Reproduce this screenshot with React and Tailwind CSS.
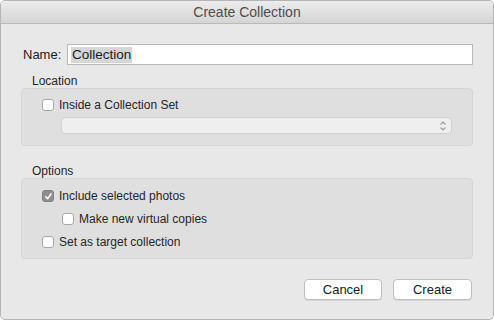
import React from 'react';

const Check = ({ checked }) => (
  <span
    className={`w-[12px] h-[12px] rounded-[3px] border flex items-center justify-center shrink-0 ${
      checked ? 'bg-[#8f8f8f] border-[#808080]' : 'bg-white border-[#a8a8a8]'
    }`}
  >
    {checked && (
      <svg width="9" height="9" viewBox="0 0 9 9">
        <path d="M1.8 4.8 L3.6 6.8 L7.2 1.8" fill="none" stroke="white" strokeWidth="1.5" strokeLinecap="round" strokeLinejoin="round" />
      </svg>
    )}
  </span>
);

const Option = ({ checked, label, className = '' }) => (
  <div className={`flex items-center gap-[5px] h-[12px] ${className}`}>
    <Check checked={checked} />
    <span className="text-[12px] text-[#262626] leading-none">{label}</span>
  </div>
);

export default function App() {
  return (
    <div
      className="w-[494px] h-[320px] bg-[#e8e8e8] border border-[#b5b5b5] rounded-[5px] overflow-hidden flex flex-col"
      style={{ fontFamily: '"Liberation Sans", Arial, sans-serif' }}
    >
      {/* Title bar */}
      <div className="h-[23px] shrink-0 bg-gradient-to-b from-[#ececec] to-[#d5d5d5] border-b border-[#b9b9b9] flex items-center justify-center">
        <span className="text-[14px] text-[#4d4d4d]">Create Collection</span>
      </div>

      <div className="flex-1 px-[20px] flex flex-col">
        {/* Name */}
        <div className="flex items-center mt-[20px] h-[21px]">
          <span className="w-[46px] pl-[2px] text-[13px] text-[#1a1a1a]">Name:</span>
          <div className="flex-1 h-[21px] bg-white border border-[#b8b8b8] flex items-center px-[3px]">
            <span className="text-[13.5px] text-[#1a1a1a] bg-[#d6d6d6] px-[1px] leading-[16px]">Collection</span>
          </div>
        </div>

        {/* Location */}
        <div className="mt-[9px] pl-[11px] text-[12px] text-[#262626] leading-[14px]">Location</div>
        <div className="h-[58px] bg-[#dfdfdf] border border-[#d6d6d6] rounded-[4px] pt-[10px] pl-[20px] pr-[20px]">
          <Option label="Inside a Collection Set" />
          <div className="mt-[6px] ml-[19px] h-[17px] bg-[#efefef] border border-[#d0d0d0] rounded-[4px] flex items-center justify-end pr-[4px]">
            <svg width="8" height="12" viewBox="0 0 8 12">
              <path d="M1.5 4.5 L4 2 L6.5 4.5 M1.5 7.5 L4 10 L6.5 7.5" fill="none" stroke="#9a9a9a" strokeWidth="1.2" />
            </svg>
          </div>
        </div>

        {/* Options */}
        <div className="mt-[18px] pl-[11px] text-[12px] text-[#262626] leading-[14px]">Options</div>
        <div className="h-[81px] bg-[#dfdfdf] border border-[#d6d6d6] rounded-[4px] pt-[11px] pl-[20px]">
          <Option checked label="Include selected photos" />
          <Option label="Make new virtual copies" className="mt-[11px] ml-[20px]" />
          <Option label="Set as target collection" className="mt-[11px]" />
        </div>

        {/* Buttons */}
        <div className="mt-[20px] flex justify-end gap-[11px] pr-[1px]">
          <button className="w-[78px] h-[21px] bg-white border border-[#c0c0c0] rounded-[4px] text-[13px] text-[#1a1a1a] shadow-[0_1px_0_rgba(0,0,0,0.08)]">
            Cancel
          </button>
          <button className="w-[79px] h-[21px] bg-white border border-[#c0c0c0] rounded-[4px] text-[13px] text-[#1a1a1a] shadow-[0_1px_0_rgba(0,0,0,0.08)]">
            Create
          </button>
        </div>
      </div>
    </div>
  );
}
